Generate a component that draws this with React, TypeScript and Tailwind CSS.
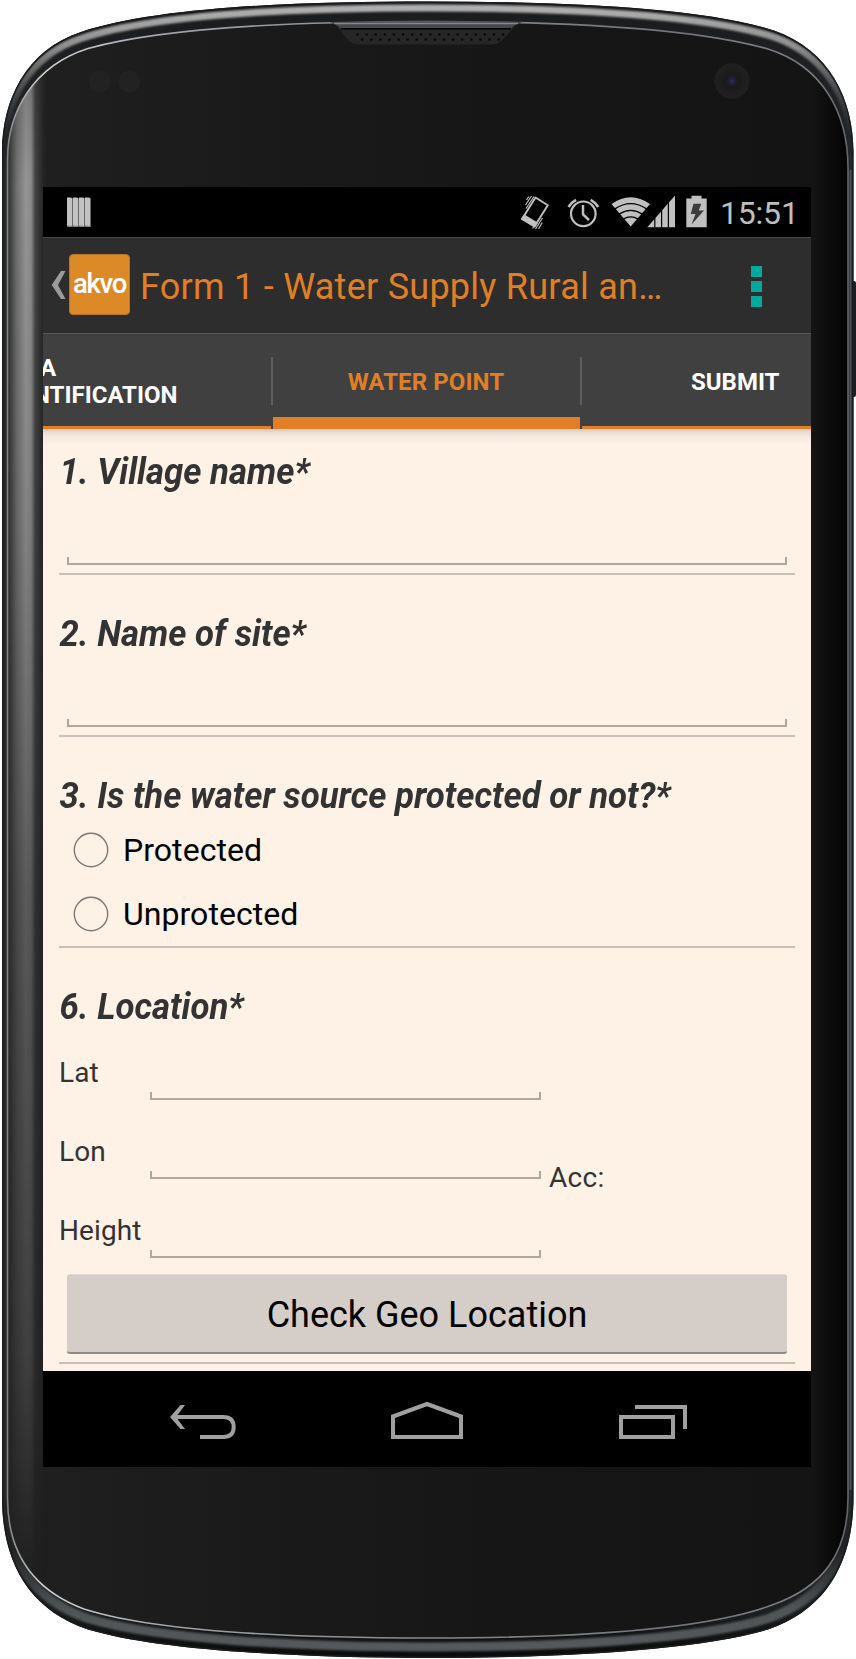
import type { ReactNode } from 'react';

const OUTER =
  'M428 1.5C560 1.5 700 7 774 30.5C830 50 853.5 100 853.5 152V1497C853.5 1560 828 1609 768 1629.5C700 1650 560 1658 428 1658C296 1658 156 1650 88 1629.5C27 1609 2 1560 2 1497V152C2 100 26 50 81 32C156 7 296 1.5 428 1.5Z';
const FACE =
  'M428 21.5C560 21.5 690 27 768 49C822 66 848 112 848 168V1498C848 1552 824 1587 772 1605C700 1632 560 1638 428 1638C296 1638 156 1632 84 1609C33 1590 7.500 1552 7.500 1498V160C7.500 112 33 66 88 48.500C166 27 296 21.500 428 21.500Z';

function PhoneBody() {
  const holes: ReactNode[] = [];
  for (let i = 0; i < 17; i++) {
    holes.push(<circle key={`a${i}`} cx={357.500 + i * 9.100} cy={34.500} r={1.300} />);
    if (i < 16) holes.push(<circle key={`b${i}`} cx={353 + (i + 1) * 9.100} cy={39.500} r={1.300} />);
  }
  return (
    <svg className="absolute inset-0 h-[1659px] w-[856px]" viewBox="0 0 856 1659" aria-hidden="true">
      <defs>
        <linearGradient id="rim" x1="0" y1="0" x2="0" y2="1659" gradientUnits="userSpaceOnUse">
          <stop offset="0" stopColor="#1a1b1d" />
          <stop offset="0.1" stopColor="#24272a" />
          <stop offset="0.9" stopColor="#242628" />
          <stop offset="0.97" stopColor="#1c1e1f" />
          <stop offset="1" stopColor="#0a0a0a" />
        </linearGradient>
        <linearGradient id="shineTop" x1="0" y1="0" x2="0" y2="130" gradientUnits="userSpaceOnUse">
          <stop offset="0" stopColor="#b0b0b0" />
          <stop offset="0.3" stopColor="#909090" />
          <stop offset="1" stopColor="#555" stopOpacity="0" />
        </linearGradient>
        <linearGradient id="shineBottom" x1="0" y1="1560" x2="0" y2="1659" gradientUnits="userSpaceOnUse">
          <stop offset="0" stopColor="#505456" stopOpacity="0" />
          <stop offset="0.6" stopColor="#505456" />
          <stop offset="1" stopColor="#55595b" />
        </linearGradient>
        <linearGradient id="edge" x1="0" y1="0" x2="856" y2="0" gradientUnits="userSpaceOnUse">
          <stop offset="0" stopColor="#75756e" />
          <stop offset="0.05" stopColor="#d0d2d4" />
          <stop offset="0.2" stopColor="#9fa1a6" />
          <stop offset="0.8" stopColor="#717378" />
          <stop offset="0.95" stopColor="#7d8085" />
          <stop offset="1" stopColor="#5c5f63" />
        </linearGradient>
        <linearGradient id="face" x1="0" y1="0" x2="856" y2="0" gradientUnits="userSpaceOnUse">
          <stop offset="0" stopColor="#202020" />
          <stop offset="0.3" stopColor="#1a1a1a" />
          <stop offset="0.6" stopColor="#161616" />
          <stop offset="0.95" stopColor="#141414" />
          <stop offset="0.985" stopColor="#050505" />
          <stop offset="1" stopColor="#040404" />
        </linearGradient>
        <linearGradient id="glow" x1="8" y1="0" x2="48" y2="0" gradientUnits="userSpaceOnUse">
          <stop offset="0" stopColor="#2e2e2e" />
          <stop offset="0.22" stopColor="#707070" />
          <stop offset="0.45" stopColor="#969696" />
          <stop offset="0.58" stopColor="#8a8a8a" />
          <stop offset="0.68" stopColor="#444" />
          <stop offset="0.88" stopColor="#252525" />
          <stop offset="1" stopColor="#202020" stopOpacity="0" />
        </linearGradient>
        <linearGradient id="fade" x1="0" y1="60" x2="0" y2="1580" gradientUnits="userSpaceOnUse">
          <stop offset="0" stopColor="#fff" stopOpacity="0.75" />
          <stop offset="0.08" stopColor="#fff" />
          <stop offset="0.3" stopColor="#fff" stopOpacity="0.85" />
          <stop offset="0.55" stopColor="#fff" stopOpacity="0.5" />
          <stop offset="0.85" stopColor="#fff" stopOpacity="0.28" />
          <stop offset="1" stopColor="#fff" stopOpacity="0" />
        </linearGradient>
        <mask id="glowMask">
          <rect x="0" y="0" width="60" height="1659" fill="url(#fade)" />
        </mask>
        <clipPath id="faceClip">
          <path d={FACE} />
        </clipPath>
        <clipPath id="outerClip">
          <path d={OUTER} />
        </clipPath>
        <filter id="soft" x="-5%" y="-5%" width="110%" height="110%">
          <feGaussianBlur stdDeviation="1.3" />
        </filter>
        <radialGradient id="lens">
          <stop offset="0" stopColor="#2c2c58" />
          <stop offset="0.2" stopColor="#1e1e32" />
          <stop offset="0.35" stopColor="#1a1a1b" />
          <stop offset="0.9" stopColor="#202020" />
          <stop offset="1" stopColor="#1a1a1a" />
        </radialGradient>
      </defs>
      <rect x="850" y="281" width="6" height="116" rx="2" fill="#1c1e20" />
      <path d={OUTER} fill="url(#rim)" />
      <g clipPath="url(#outerClip)">
        <g filter="url(#soft)" fill="none">
          <path d={OUTER} transform="translate(0 6.500)" stroke="url(#shineTop)" strokeWidth="7" />
          <path d={OUTER} transform="translate(0 -11)" stroke="url(#shineBottom)" strokeWidth="9" />
        </g>
        <path d={OUTER} fill="none" stroke="#191b1c" strokeWidth="3" />
      </g>
      <path d={FACE} fill="url(#face)" />
      <g clipPath="url(#faceClip)">
        <rect x="0" y="40" width="50" height="1560" fill="url(#glow)" mask="url(#glowMask)" />
      </g>
      <path d={FACE} fill="none" stroke="url(#edge)" strokeWidth="1.6" />
      <path d="M850.500 170V1490" stroke="#6c6f72" strokeWidth="2" opacity="0.6" />
      <path d="M328 21.500H524C515 23 512 31 502 40Q498 44.500 492 44.500H360Q352 44.500 348 40C340 31 337 23 328 21.500Z" fill="#262626" />
      <path d="M330 22H522Q514 24 511 29H341Q337 24 330 22Z" fill="#48494c" />
      <path d="M334 23.500H518" stroke="#85878b" strokeWidth="1.500" />
      <path d="M341 28.800H511" stroke="#050505" strokeWidth="1.500" />
      <g fill="#090909">{holes}</g>
      <circle cx="99.500" cy="81.500" r="11" fill="#222" />
      <circle cx="129.500" cy="81.500" r="11" fill="#222" />
      <circle cx="732" cy="81" r="18" fill="url(#lens)" />
    </svg>
  );
}

function StatusBar() {
  return (
    <div className="flex h-[50px] items-center bg-black pl-6 pr-[13px]">
      <svg className="h-[30px] w-6" viewBox="0 0 24 30">
        {[0, 6, 12, 18].map((x) => (
          <g key={x}>
            <path d={`M${x} 0.500h4l1.500 1v28.500h-4l-1.500-1z`} fill="#c2c2c2" />
            <path d={`M${x + 5.500} 1.500v28`} stroke="#6a6a6a" strokeWidth="0.8" />
            <path d={`M${x} 29l5.500 0.500`} stroke="#777" strokeWidth="1" />
          </g>
        ))}
      </svg>
      <svg className="ml-auto h-9 w-[192px]" viewBox="518 193.500 192 36" fill="none">
        <g stroke="#c0c0c0" strokeWidth="1.900" strokeLinejoin="round">
          <path d="M535.500 197L547.800 204.800L534.600 225.800L522.200 218.200Z" />
          <path d="M522 218.500L524.300 215L536.700 222.600L534.600 226Z" fill="#c0c0c0" />
          <g strokeWidth="1.200">
            <path d="M526 208L534 196M525.500 204.500L531.500 195.500M526.500 199.500L529 196" />
            <path d="M535.500 228.500L542.500 217.500M538.500 228.500L542.300 222M532.500 228L534 226" />
          </g>
        </g>
        <g stroke="#c0c0c0" strokeWidth="2.200">
          <circle cx="583.300" cy="213.300" r="12.300" />
          <path d="M583 204.500V214L589 219.500" strokeWidth="2.500" />
          <path d="M568.500 206.500Q571 202 576 199.300M590.700 199.300Q595.700 202 598.200 206.500" strokeWidth="2.600" />
        </g>
        <path d="M630.700 226L611.500 203.500Q630.700 190 650 203.500Z" fill="#c0c0c0" />
        <g stroke="#000" strokeWidth="1.300">
          <path d="M614.500 208.600Q630.700 197.500 647 208.600" />
          <path d="M619 213.600Q630.700 206 642.500 213.600" />
          <path d="M623.300 218.600Q630.700 214 638.200 218.600" />
        </g>
        <path d="M647.300 226.700H675V195Z" fill="#c0c0c0" />
        <path d="M654.800 215V227M661.600 207V227M668.400 200V227" stroke="#000" strokeWidth="1.200" />
        <path d="M686.300 198H691.500V195.300H701.500V198H706.700V226.700H686.300Z" fill="#c0c0c0" />
        <path d="M693.500 203.300H701.300L698.700 210H704L691.500 224L695.500 213.500H690.800Z" fill="#3c3c3c" />
      </svg>
      <span className="ml-[10px] w-[78px] whitespace-nowrap pt-0.5 text-[32px] leading-[38px] tracking-[-0.2px] text-[#bebebe]">15:51</span>
    </div>
  );
}

function ActionBar() {
  return (
    <header className="flex h-24 items-center border-t border-[#4b4747] bg-[#2d2d2d] pl-2 pr-[49px]">
      <svg className="-mt-0.5 h-7 w-[15px] shrink-0" viewBox="51 271 15 28">
        <path d="M61 271H65.500L58 285L65.500 299H61L51.700 285Z" fill="#9b9b9b" />
      </svg>
      <div className="-mt-0.5 ml-[3px] flex h-[61px] w-[61px] shrink-0 items-center justify-center rounded-[4px] border border-[#b8742a] bg-[#dc8928]">
        <span className="-mt-0.5 text-[27.500px] font-medium leading-8 tracking-[-1.3px] text-white">akvo</span>
      </div>
      <h1 className="ml-[10px] whitespace-nowrap pt-[3px] text-[36px] font-normal leading-[42px] tracking-[0.26px] text-[#e17f26]">
        Form 1 - Water Supply Rural an…
      </h1>
      <div className="ml-auto flex flex-col gap-1 pt-px">
        {[0, 1, 2].map((i) => (
          <span key={i} className="h-[11px] w-[11px] bg-[#00a99d]" />
        ))}
      </div>
    </header>
  );
}

function Tabs() {
  return (
    <nav className="flex h-24 border-t border-[#575757] bg-[#404040] text-[24px] font-bold leading-[27px] text-white">
      <div className="flex w-[228px] items-center overflow-hidden border-b-[3px] border-[#e17f26]">
        <div className="mt-1 flex flex-col">
          <span className="-ml-[3px]">A</span>
          <span className="-ml-[10px]">NTIFICATION</span>
        </div>
      </div>
      <div className="mt-[23px] h-12 w-0.5 bg-[#5e5e5e]" />
      <div className="flex w-[307px] items-center justify-center border-b-[12px] border-[#e17f26] pr-px pt-[13px] tracking-[0.1px] text-[#e17f26]">
        WATER POINT
      </div>
      <div className="mt-[23px] h-12 w-0.5 bg-[#5e5e5e]" />
      <div className="flex flex-1 items-center border-b-[3px] border-[#e17f26] pl-[109px] pt-1">SUBMIT</div>
    </nav>
  );
}

function Heading({ children }: { children: ReactNode }) {
  return (
    <h2 className="origin-left scale-x-[0.966] whitespace-nowrap pl-[0.5px] text-[36px] font-bold italic leading-[42px] text-[#333]">
      {children}
    </h2>
  );
}

function Rule() {
  return <div className="h-0.5 bg-[#c8c0b9]" />;
}

function Underline({ className }: { className: string }) {
  return <div className={`h-2 border-x-2 border-b-2 border-[#b0a8a0] ${className}`} />;
}

function Radio({ label }: { label: string }) {
  return (
    <label className="flex h-16 items-center pl-[15px]">
      <svg className="-ml-px -mt-px h-9 w-9" viewBox="0 0 36 36" fill="none">
        <circle cx="18" cy="18" r="16.700" stroke="#7d7873" strokeWidth="1.400" />
      </svg>
      <span className="ml-[14px] text-[32px] leading-[38px] tracking-[0.05px] text-black">{label}</span>
    </label>
  );
}

function Coordinate({ label, first }: { label: string; first?: boolean }) {
  return (
    <div className={`flex items-end ${first ? 'h-[72px]' : 'h-[79px]'}`}>
      <span className="w-[91px] pb-[11px] text-[28px] leading-8 tracking-[0.1px] text-[#333]">{label}</span>
      <Underline className="w-[391px]" />
    </div>
  );
}

function NavBar() {
  return (
    <footer className="flex h-24 items-center bg-black pl-[125px] pt-0.5">
      <svg className="h-10 w-[72px]" viewBox="168 1400 72 40" fill="none" stroke="#a0a0a0" strokeWidth="4">
        <path d="M173 1417H223Q233.700 1417 233.700 1427Q233.700 1437 223 1437H200" />
        <path d="M185 1405H180.500L170 1417L180.500 1429H185L176 1417Z" fill="#a0a0a0" stroke="none" />
      </svg>
      <svg className="ml-[149px] h-10 w-[76px]" viewBox="389 1400 76 40" fill="none" stroke="#a0a0a0" strokeWidth="4">
        <path d="M393 1416.500L427 1404L461 1416.500V1437H393Z" />
      </svg>
      <svg className="ml-[152px] h-10 w-[72px]" viewBox="617 1400 72 40" fill="none" stroke="#a0a0a0" strokeWidth="4">
        <path d="M621 1417H673V1437H621Z" />
        <path d="M635 1407H685V1429" />
      </svg>
    </footer>
  );
}

export default function App() {
  return (
    <div className="relative h-[1659px] w-[856px] overflow-hidden bg-white font-['Roboto',sans-serif]">
      <PhoneBody />
      <div className="relative pl-[43px] pt-[187px]">
        <div className="flex h-[1280px] w-[768px] flex-col overflow-hidden bg-[#fef1e6]">
          <StatusBar />
          <ActionBar />
          <Tabs />
          <main className="h-[942px] bg-[linear-gradient(to_bottom,#d3c8bf_0px,#eee2d7_4px,#f7eae0_9px,#fef1e6_16px)] px-4 pt-[22px]">
            <section>
              <Heading>1. Village name*</Heading>
              <Underline className="mx-2 mb-2 mt-16" />
              <Rule />
            </section>
            <section className="pt-[38px]">
              <Heading>2. Name of site*</Heading>
              <Underline className="mx-2 mb-2 mt-16" />
              <Rule />
            </section>
            <section className="pt-[38px]">
              <Heading>3. Is the water source protected or not?*</Heading>
              <div className="pt-px">
                <Radio label="Protected" />
                <Radio label="Unprotected" />
              </div>
              <Rule />
            </section>
            <section className="pt-[38px]">
              <Heading>6. Location*</Heading>
              <div className="flex">
                <div>
                  <Coordinate label="Lat" first />
                  <Coordinate label="Lon" />
                  <Coordinate label="Height" />
                </div>
                <span className="ml-2 self-end pb-[64px] text-[28px] leading-8 tracking-[0.3px] text-[#333]">Acc:</span>
              </div>
              <div className="px-2 pb-2 pt-4">
                <button className="block h-20 w-full rounded-[3px] border-b-2 border-t border-b-[#8f8a86] border-t-[#dfd9d4] bg-[#d5cdc8] pt-[3px] text-[36px] leading-[42px] text-black">
                  Check Geo Location
                </button>
              </div>
              <Rule />
            </section>
          </main>
          <NavBar />
        </div>
      </div>
    </div>
  );
}
